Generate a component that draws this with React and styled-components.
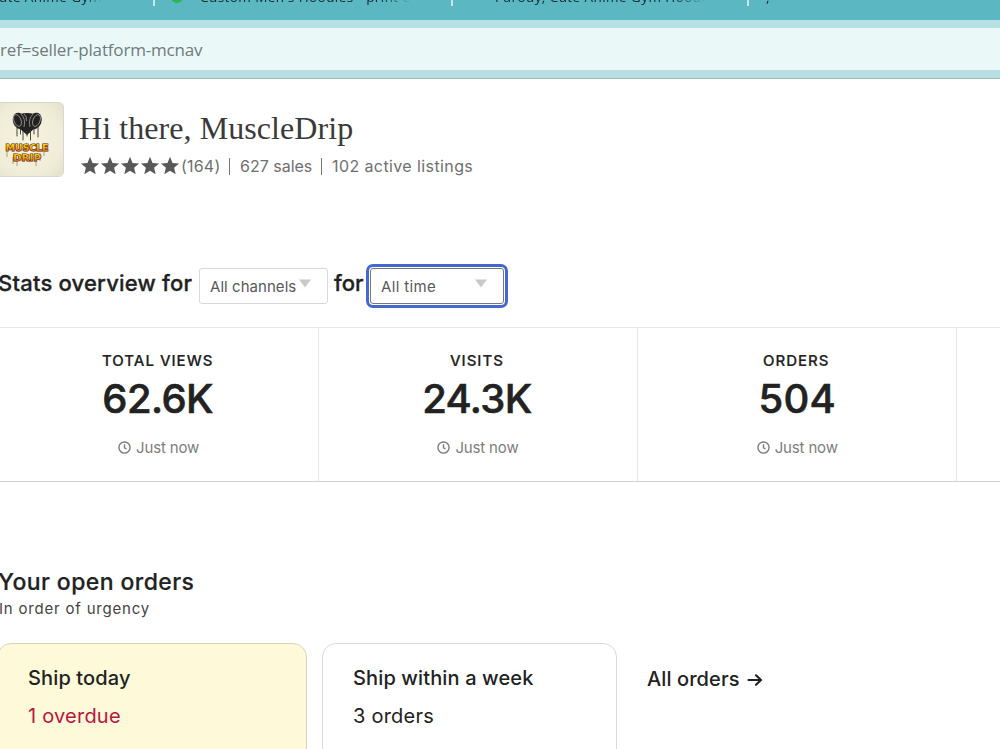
import React from 'react'
import styled, { createGlobalStyle } from 'styled-components'


function App() {
    return (
        <Page>
            <GlobalStyle />

            <TabStrip>
                <Tab width={155} indent={-10}>
                    <TabTitle>Cute Anime Gym</TabTitle>
                </Tab>
                <Tab width={298} indent={16}>
                    <Favicon />
                    <TabTitle>Custom Men's Hoodies - print o</TabTitle>
                </Tab>
                <Tab width={296} indent={42}>
                    <TabTitle>Parody, Cute Anime Gym Hoodi</TabTitle>
                </Tab>
                <Tab width={251} indent={17} last>
                    <TabTitle>,</TabTitle>
                </Tab>
            </TabStrip>

            <Toolbar>
                <AddressBar>ref=seller-platform-mcnav</AddressBar>
            </Toolbar>

            <ShopHeader>
                <Avatar>
                    <ShopLogo />
                </Avatar>
                <ShopInfo>
                    <Greeting>Hi there, MuscleDrip</Greeting>
                    <Meta>
                        <Stars>
                            {[0, 1, 2, 3, 4].map((n) => <Star key={n} />)}
                        </Stars>
                        <Reviews>(164)</Reviews>
                        <Divider />
                        <Sales>627 sales</Sales>
                        <Divider />
                        <Listings>102 active listings</Listings>
                    </Meta>
                </ShopInfo>
            </ShopHeader>

            <StatsHeader>
                <StatsTitle>Stats overview for</StatsTitle>
                <Select width={129}>
                    All channels
                    <Caret gap={3} />
                </Select>
                <StatsFor>for</StatsFor>
                <FocusRing>
                    <Select width={134} focused>
                        All time
                        <Caret gap={39} />
                    </Select>
                </FocusRing>
            </StatsHeader>

            <StatsGrid>
                {stats.map((stat) => (
                    <StatCell key={stat.label}>
                        <StatLabel>{stat.label}</StatLabel>
                        <StatValue>{stat.value}</StatValue>
                        <Updated>
                            <Clock />
                            Just now
                        </Updated>
                    </StatCell>
                ))}
                <StatCell />
            </StatsGrid>

            <Orders>
                <OrdersTitle>Your open orders</OrdersTitle>
                <OrdersSub>In order of urgency</OrdersSub>
                <Cards>
                    <Card width={310} urgent>
                        <CardTitle>Ship today</CardTitle>
                        <CardCount urgent>1 overdue</CardCount>
                    </Card>
                    <Card width={295}>
                        <CardTitle>Ship within a week</CardTitle>
                        <CardCount>3 orders</CardCount>
                    </Card>
                    <AllOrders>
                        All orders
                        <Arrow />
                    </AllOrders>
                </Cards>
            </Orders>
        </Page>
    )
}

export default App


const stats = [
    { label: 'TOTAL VIEWS', value: '62.6K' },
    { label: 'VISITS', value: '24.3K' },
    { label: 'ORDERS', value: '504' },
]

function Star() {
    return (
        <svg width="20" height="20" viewBox="0 0 20 20">
            <path fill="#595959" d="M10 .8l2.5 6.1 6.6.5-5 4.3 1.6 6.5L10 14.7l-5.7 3.5 1.6-6.5-5-4.3 6.6-.5z" />
        </svg>
    )
}

function Clock() {
    return (
        <svg width="13" height="13" viewBox="0 0 14 14" fill="none" stroke="#7d7d7d" strokeWidth="1.5">
            <circle cx="7" cy="7" r="6" />
            <path d="M7 3.4V7.3L9.2 8.6" />
        </svg>
    )
}

function Arrow() {
    return (
        <svg width="16" height="14" viewBox="0 0 16 14" fill="none" stroke="#222" strokeWidth="2.2" strokeLinecap="round" strokeLinejoin="round">
            <path d="M1.5 8H14M9 3.3L14 8L9 12.7" />
        </svg>
    )
}

function Caret({ gap }) {
    return (
        <CaretIcon $gap={gap} width="12" height="9" viewBox="0 0 12 9">
            <path fill="#c9c9c9" d="M0 .5H12L6 8.5Z" />
        </CaretIcon>
    )
}

function ShopLogo() {
    return (
        <svg width="72" height="73" viewBox="0 0 72 73">
            <defs>
                <radialGradient id="paper" cx="50%" cy="50%" r="75%">
                    <stop offset="0" stopColor="#f6f3de" />
                    <stop offset=".65" stopColor="#efecd8" />
                    <stop offset="1" stopColor="#e0ddc6" />
                </radialGradient>
                <linearGradient id="flame" x1="0" y1="0" x2="0" y2="1">
                    <stop offset=".2" stopColor="#f9d41c" />
                    <stop offset=".6" stopColor="#f3a014" />
                    <stop offset="1" stopColor="#d4420f" />
                </linearGradient>
            </defs>
            <rect width="72" height="73" fill="url(#paper)" />
            {/* dumbbell plates */}
            <g fill="#222">
                <ellipse cx="28.5" cy="18" rx="6.5" ry="8.5" transform="rotate(-22 28.5 18)" />
                <ellipse cx="44" cy="18" rx="6.5" ry="8.5" transform="rotate(22 44 18)" />
                <path d="M29 11Q36 9 43 11L44 25L36 32L28 25Z" />
            </g>
            <g fill="none" stroke="#a5a298" strokeWidth=".8">
                <ellipse cx="26.5" cy="17.5" rx="3.5" ry="6.2" transform="rotate(-22 26.5 17.5)" />
                <path d="M30 11Q35 16 33 24M42 11Q37 16 39 24M33 11Q36 13 35.5 18" />
                <ellipse cx="45.5" cy="17.5" rx="3.5" ry="6.2" transform="rotate(22 45.5 17.5)" />
            </g>
            {/* drips */}
            <path d="M26 24V33M29.5 26V31M32 28V37M36 28V33M39.5 27V37M43 25V31M47 23V34" stroke="#333" strokeWidth=".9" strokeLinecap="round" />
            <path d="M16 49V54M22 54V61M26 57V63M45 57V63M49 50V58M53 49V53" stroke="#8f8a7c" strokeWidth=".8" />
            <LogoText x="36" y="48" textLength="43" lengthAdjust="spacingAndGlyphs">MUSCLE</LogoText>
            <LogoText x="36" y="57.5" textLength="28" lengthAdjust="spacingAndGlyphs">DRIP</LogoText>
        </svg>
    )
}


const GlobalStyle = createGlobalStyle`
    * {
        box-sizing:border-box;
    }

    body {
        margin:0;
        background:#fff;
        overflow:hidden;
    }
`

const Page = styled.div`
    width:1000px;
    height:749px;
    overflow:hidden;
    background:#fff;
    color:#222;
    font-family:Inter, "Liberation Sans", sans-serif;
    white-space:nowrap;
`

const TabStrip = styled.div`
    display:flex;
    height:20px;
    overflow:hidden;
    background:#5bb7c1;
`

const Tab = styled.div.withConfig({ shouldForwardProp: (p) => !['width', 'indent', 'last'].includes(p) })`
    display:flex;
    flex:none;
    width:${(p) => p.width}px;
    height:6px;
    padding-left:${(p) => Math.max(p.indent, 0)}px;
    border-right:${(p) => (p.last ? '0' : '2px solid #c5e8ea')};
    overflow:hidden;

    & > :first-child{
        margin-left:${(p) => Math.min(p.indent, 0)}px;
    }
`

const TabTitle = styled.span`
    margin-top:-13px;
    font-family:"Open Sans", "Noto Sans", sans-serif;
    font-size:13.5px;
    line-height:20px;
    letter-spacing:.43px;
    color:#0d2b30;
    mask-image:linear-gradient(to right, #000 85%, transparent);
`

const Favicon = styled.span`
    flex:none;
    width:12px;
    height:12px;
    margin:-9px 17px 0 0;
    border-radius:50%;
    background:#2fb457;
`

const Toolbar = styled.div`
    height:59px;
    padding:8px 0;
    background:#b8e0e3;
    border-bottom:1px solid #9dbabf;
`

const AddressBar = styled.div`
    height:42px;
    background:#ebf8f8;
    font-family:"Open Sans", "Noto Sans", sans-serif;
    font-size:17px;
    line-height:43px;
    letter-spacing:-.17px;
    color:#6f7b7c;
`

const ShopHeader = styled.div`
    display:flex;
    height:185px;
    padding-top:23px;
`

const Avatar = styled.div`
    flex:none;
    width:74px;
    height:75px;
    margin-left:-10px;
    border:1px solid #d8d8d2;
    border-radius:5px;
    overflow:hidden;
`

const LogoText = styled.text`
    font-family:"DejaVu Sans", sans-serif;
    font-size:9.5px;
    font-weight:bold;
    text-anchor:middle;
    fill:url(#flame);
    stroke:#4a1c0a;
    stroke-width:1.2px;
    paint-order:stroke;
`

const ShopInfo = styled.div`
    padding-left:15px;
`

const Greeting = styled.h1`
    margin:5px 0 0;
    font-family:"Liberation Serif", serif;
    font-size:32px;
    font-weight:normal;
    line-height:42px;
    letter-spacing:.07px;
    color:#3a3a3a;
`

const Meta = styled.div`
    display:flex;
    align-items:center;
    height:24px;
    margin-top:5px;
    font-size:16px;
    color:#6f6f6f;
`

const Stars = styled.div`
    display:flex;
    margin-left:1px;
`

const Reviews = styled.span`
    width:49px;
    padding-left:1px;
    letter-spacing:.2px;
`

const Divider = styled.span`
    width:1px;
    height:17px;
    background:#777;
`

const Sales = styled.span`
    width:91px;
    padding-left:10px;
`

const Listings = styled.span`
    padding-left:10px;
    letter-spacing:.4px;
`

const StatsHeader = styled.div`
    display:flex;
    height:63px;
`

const StatsTitle = styled.h2`
    width:201px;
    margin:5px 0 0 -2px;
    font-size:22px;
    font-weight:500;
    line-height:28px;
    letter-spacing:.2px;
    -webkit-text-stroke:.3px #222;
`

const StatsFor = styled(StatsTitle)`
    width:32px;
    margin-left:6px;
    letter-spacing:0;
`

const Select = styled.div.withConfig({ shouldForwardProp: (p) => !['width', 'focused'].includes(p) })`
    display:flex;
    align-items:center;
    flex:none;
    width:${(p) => p.width}px;
    height:36px;
    margin-top:${(p) => (p.focused ? 0 : 4)}px;
    padding-left:10px;
    border:${(p) => (p.focused ? '1.5px solid #777' : '1px solid #d9d9d9')};
    border-radius:3px;
    background:#fff;
    font-size:15px;
    letter-spacing:${(p) => (p.focused ? '.35px' : '.05px')};
    color:#595959;
`

const FocusRing = styled.div`
    width:142px;
    height:44px;
    padding:1px;
    border:3px solid #4468cf;
    border-radius:7px;
`

const CaretIcon = styled.svg`
    margin:-5px 0 0 ${(p) => p.$gap}px;
`

const StatsGrid = styled.div`
    display:grid;
    grid-template-columns:repeat(4, 319.3px);
    height:155px;
    margin-left:-.5px;
    border-top:1px solid #e8e8e8;
    border-bottom:1px solid #d2d2d2;
`

const StatCell = styled.div`
    display:flex;
    flex-direction:column;
    align-items:center;
    padding-top:22px;
    border-right:1px solid #e5e5e5;
`

const StatLabel = styled.div`
    margin-left:-2px;
    font-size:15px;
    font-weight:500;
    line-height:21px;
    letter-spacing:1px;
    -webkit-text-stroke:.2px #222;
`

const StatValue = styled.div`
    margin-left:-2px;
    font-size:40px;
    font-weight:500;
    line-height:55px;
    letter-spacing:-.6px;
    -webkit-text-stroke:.6px #222;

    ${StatCell}:nth-child(3) &{
        margin-left:0;
        letter-spacing:.2px;
    }
`

const Updated = styled.div`
    display:flex;
    align-items:center;
    gap:5px;
    height:20px;
    margin-top:11px;
    font-size:15px;
    letter-spacing:-.15px;
    color:#7d7d7d;
`

const Orders = styled.div`
    padding-top:85px;
`

const OrdersTitle = styled.h2`
    margin:0 0 0 -2px;
    font-size:23px;
    font-weight:500;
    line-height:30px;
    letter-spacing:.42px;
    -webkit-text-stroke:.2px #222;
`

const OrdersSub = styled.div`
    margin-left:-1px;
    font-size:15px;
    line-height:24px;
    letter-spacing:.8px;
    color:#444;
`

const Cards = styled.div`
    display:flex;
    margin:22px 0 0 -3px;
`

const Card = styled.div.withConfig({ shouldForwardProp: (p) => !['width', 'urgent'].includes(p) })`
    flex:none;
    width:${(p) => p.width}px;
    height:124px;
    margin-right:15px;
    padding:20px 30px;
    border:1px solid ${(p) => (p.urgent ? '#d9d5b4' : '#dadada')};
    border-radius:14px;
    background:${(p) => (p.urgent ? '#fef9d9' : '#fff')};
`

const CardTitle = styled.div`
    font-size:20px;
    font-weight:500;
    line-height:28px;
    letter-spacing:.13px;
`

const CardCount = styled.div.withConfig({ shouldForwardProp: (p) => p !== 'urgent' })`
    margin-top:10px;
    font-size:20px;
    line-height:28px;
    letter-spacing:.22px;
    color:${(p) => (p.urgent ? '#b8163f' : '#222')};
`

const AllOrders = styled.a`
    display:flex;
    align-items:center;
    gap:7px;
    height:28px;
    margin:22px 0 0 15px;
    font-size:20px;
    font-weight:500;
    letter-spacing:.1px;
`
